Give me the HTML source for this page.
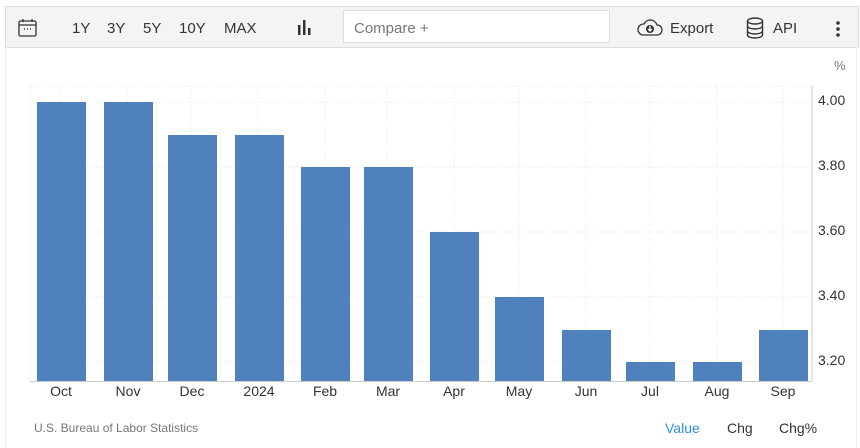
<!DOCTYPE html>
<html><head><style>
body{margin:0;width:860px;height:448px;background:#fff;font-family:"Liberation Sans",sans-serif;position:relative;overflow:hidden}
.tb{position:absolute;left:5px;top:6px;width:852px;height:40px;background:#f4f4f4;border:1px solid #ddd}
.t{position:absolute;font-size:15px;color:#333;top:20px}
.cmp{position:absolute;left:343px;top:10px;width:267px;height:33px;background:#fff;border:1px solid #ddd;box-sizing:border-box;font-size:15px;color:#777;padding:9px 10px}
.side{position:absolute;left:5px;top:47px;width:852px;height:401px;border-left:1px solid #eee;border-right:1px solid #eee;box-sizing:border-box}
</style></head><body>
<div class="tb"></div>
<div class="side"></div>
<svg style="position:absolute;left:18px;top:18px" width="20" height="20" viewBox="0 0 20 20" fill="none" stroke="#333" stroke-width="1.3"><rect x="1" y="3" width="17" height="15" rx="1.5"/><line x1="1" y1="7" x2="18" y2="7"/><line x1="5" y1="1" x2="5" y2="4"/><line x1="14" y1="1" x2="14" y2="4"/><path d="M6 11h1M9 11h1M12 11h1" stroke-width="1.5"/></svg>
<div class="t" style="left:72px">1Y</div><div class="t" style="left:107px">3Y</div><div class="t" style="left:143px">5Y</div><div class="t" style="left:179px">10Y</div><div class="t" style="left:224px">MAX</div>
<svg style="position:absolute;left:297px;top:20px" width="16" height="16"><rect x="1" y="5" width="2.5" height="10" fill="#333"/><rect x="6" y="0" width="2.5" height="15" fill="#333"/><rect x="11" y="8" width="2.5" height="7" fill="#333"/></svg>
<div class="cmp">Compare +</div>
<svg style="position:absolute;left:636px;top:18px" width="28" height="20" viewBox="0 0 28 20" fill="none" stroke="#333" stroke-width="1.3"><path d="M7 17h14a5 5 0 0 0 0-10 7 7 0 0 0-13-1 5.5 5.5 0 0 0-1 11z"/><circle cx="14" cy="11" r="4" fill="#333" stroke="none"/><path d="M14 8v5M12 11l2 2 2-2" stroke="#fff"/></svg>
<div class="t" style="left:670px">Export</div>
<svg style="position:absolute;left:746px;top:17px" width="18" height="22" viewBox="0 0 18 22" fill="none" stroke="#333" stroke-width="1.4"><ellipse cx="9" cy="4" rx="7.5" ry="3"/><path d="M1.5 4v14c0 1.7 3.4 3 7.5 3s7.5-1.3 7.5-3V4M1.5 9c0 1.7 3.4 3 7.5 3s7.5-1.3 7.5-3M1.5 14c0 1.7 3.4 3 7.5 3s7.5-1.3 7.5-3"/></svg>
<div class="t" style="left:773px">API</div>
<svg style="position:absolute;left:835px;top:20px" width="6" height="18"><circle cx="3" cy="3" r="1.8" fill="#333"/><circle cx="3" cy="9" r="1.8" fill="#333"/><circle cx="3" cy="15" r="1.8" fill="#333"/></svg>
<svg style="position:absolute;left:0;top:0" width="860" height="448" font-family="Liberation Sans, sans-serif">
<g stroke="#e6e6e6" stroke-dasharray="1,2" stroke-width="1">
<line x1="30" y1="86" x2="812" y2="86"/><line x1="30" y1="102" x2="812" y2="102"/><line x1="30" y1="167" x2="812" y2="167"/><line x1="30" y1="232" x2="812" y2="232"/><line x1="30" y1="297" x2="812" y2="297"/><line x1="30" y1="362" x2="812" y2="362"/>
<line x1="30" y1="86" x2="30" y2="381"/><line x1="60" y1="86" x2="60" y2="381"/><line x1="127" y1="86" x2="127" y2="381"/><line x1="191" y1="86" x2="191" y2="381"/><line x1="258" y1="86" x2="258" y2="381"/><line x1="325" y1="86" x2="325" y2="381"/><line x1="387" y1="86" x2="387" y2="381"/><line x1="454" y1="86" x2="454" y2="381"/><line x1="519" y1="86" x2="519" y2="381"/><line x1="586" y1="86" x2="586" y2="381"/><line x1="650" y1="86" x2="650" y2="381"/><line x1="717" y1="86" x2="717" y2="381"/><line x1="783" y1="86" x2="783" y2="381"/>
</g>
<line x1="812" y1="86" x2="812" y2="381" stroke="#ccc"/>
<line x1="30" y1="381.5" x2="812" y2="381.5" stroke="#ccc"/>
<g fill="#4f81bd">
<rect x="37" y="102" width="49" height="279"/><rect x="104" y="102" width="49" height="279"/><rect x="168" y="135" width="49" height="246"/><rect x="235" y="135" width="49" height="246"/><rect x="301" y="167" width="49" height="214"/><rect x="364" y="167" width="49" height="214"/><rect x="430" y="232" width="49" height="149"/><rect x="495" y="297" width="49" height="84"/><rect x="562" y="330" width="49" height="51"/><rect x="626" y="362" width="49" height="19"/><rect x="693" y="362" width="49" height="19"/><rect x="759" y="330" width="49" height="51"/>
</g>
<g font-size="14" fill="#333">
<text x="818" y="105">4.00</text><text x="818" y="170">3.80</text><text x="818" y="235">3.60</text><text x="818" y="300">3.40</text><text x="818" y="365">3.20</text>
</g>
<text x="834" y="70" font-size="13" fill="#777">%</text>
<g font-size="14" fill="#333" text-anchor="middle">
<text x="61" y="396">Oct</text><text x="128" y="396">Nov</text><text x="192" y="396">Dec</text><text x="259" y="396">2024</text><text x="325" y="396">Feb</text><text x="388" y="396">Mar</text><text x="454" y="396">Apr</text><text x="519" y="396">May</text><text x="586" y="396">Jun</text><text x="650" y="396">Jul</text><text x="717" y="396">Aug</text><text x="783" y="396">Sep</text>
</g>
<text x="34" y="432" font-size="12" fill="#777">U.S. Bureau of Labor Statistics</text>
<text x="665" y="433" font-size="14" fill="#2f8ee0">Value</text>
<text x="727" y="433" font-size="14" fill="#333">Chg</text>
<text x="779" y="433" font-size="14" fill="#333">Chg%</text>
</svg>
</body></html>
